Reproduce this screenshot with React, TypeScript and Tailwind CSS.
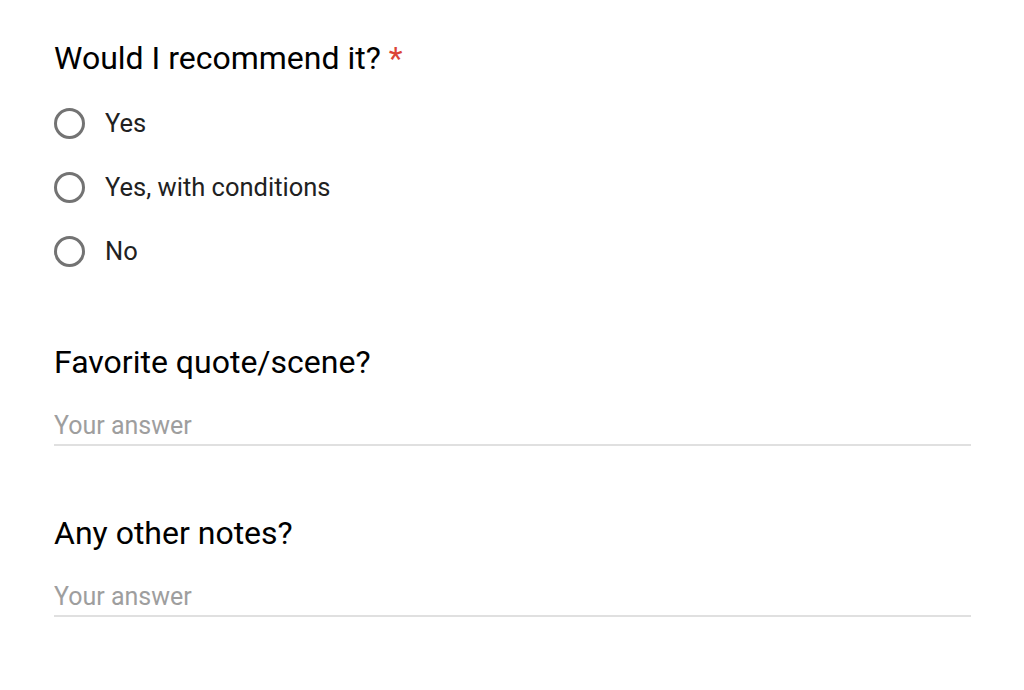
import React from 'react';

const options = ['Yes', 'Yes, with conditions', 'No'];

const Radio = ({ label }: { label: string }) => (
    <label className="flex items-center h-[64px] cursor-pointer">
        <span className="w-[31px] h-[31px] rounded-full border-[3px] border-[#737373] shrink-0" />
        <span className="ml-[20px] text-[25.5px] text-[#212121]">{label}</span>
    </label>
);

const TextQuestion = ({ title }: { title: string }) => (
    <div>
        <h2 className="text-[32px] text-black leading-[40px]">{title}</h2>
        <div className="mt-[24px] w-[917px] border-b-2 border-[#e0e0e0]">
            <input
                placeholder="Your answer"
                className="w-full h-[38px] text-[25px] text-[#212121] placeholder:text-[#9e9e9e] outline-none bg-transparent"
            />
        </div>
    </div>
);

export default function App() {
    return (
        <div className="min-h-[690px] bg-white pl-[54px] pt-[38px]" style={{ fontFamily: 'Roboto, "Noto Sans", sans-serif' }}>
            <h2 className="text-[32px] text-black leading-[40px]">
                Would I recommend it? <span className="text-[#db4437]">*</span>
            </h2>
            <div className="mt-[13px]">
                {options.map((o) => (
                    <Radio key={o} label={o} />
                ))}
            </div>
            <div className="mt-[59px]">
                <TextQuestion title="Favorite quote/scene?" />
            </div>
            <div className="mt-[67px]">
                <TextQuestion title="Any other notes?" />
            </div>
        </div>
    );
}
